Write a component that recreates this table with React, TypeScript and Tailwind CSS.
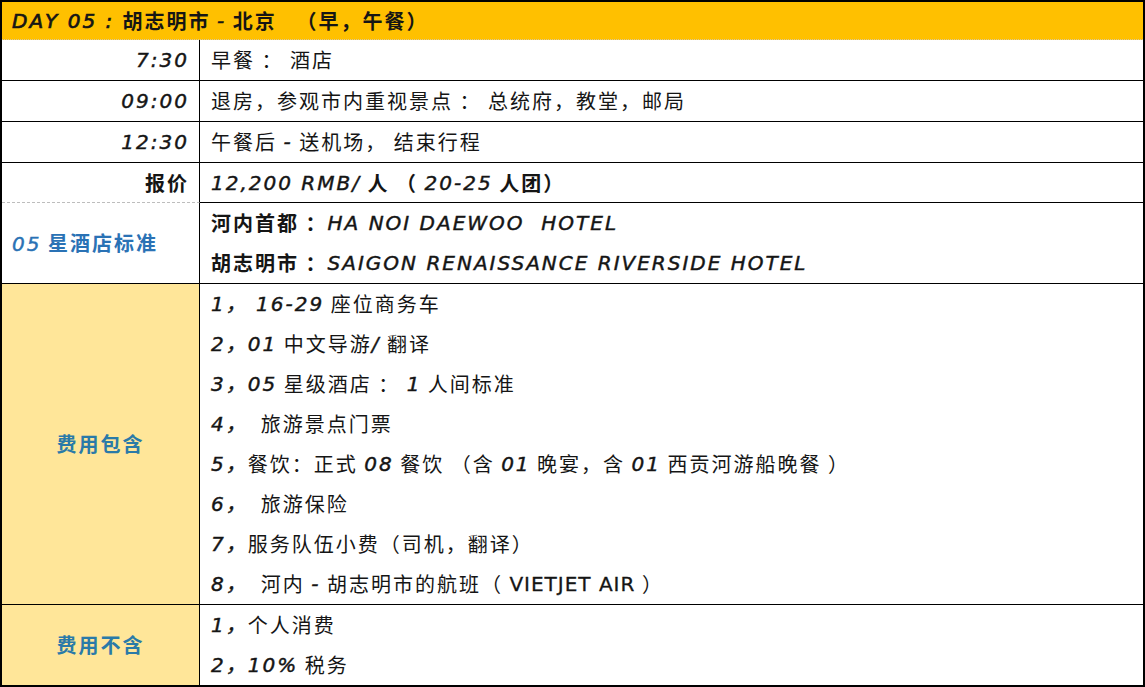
import type { ReactNode } from 'react';

const CJK = "font-['Noto_Sans_CJK_SC','Noto_Sans',sans-serif]";
const LAT =
  "font-['DejaVu_Sans','Noto_Sans_CJK_SC',sans-serif] italic font-normal text-[20px] tracking-[2px] [-webkit-text-stroke:0.45px]";
const LAT_UP =
  "font-['DejaVu_Sans','Noto_Sans_CJK_SC',sans-serif] font-normal text-[20px] tracking-[1px] [-webkit-text-stroke:0.3px]";

function L({ children, upright }: { children: ReactNode; upright?: boolean }) {
  return <span className={upright ? LAT_UP : LAT}>{children}</span>;
}

function Row({
  left,
  children,
  leftClass = '',
  lines = 1,
}: {
  left: ReactNode;
  children: ReactNode;
  leftClass?: string;
  lines?: number;
}) {
  return (
    <div className="flex border-b border-black">
      <div className={`flex w-[198px] shrink-0 items-center border-r border-black ${leftClass}`}>{left}</div>
      <div className="flex flex-1 flex-col justify-center pl-[11px]" style={{ minHeight: lines * 40 - 1 }}>
        {children}
      </div>
    </div>
  );
}

function Line({ children }: { children: ReactNode }) {
  return <div className="flex h-[40px] items-center whitespace-pre">{children}</div>;
}

export default function App() {
  const includes: ReactNode[] = [
    <><L>1， 16-29</L> 座位商务车</>,
    <><L>2，01</L> 中文导游<L>/</L> 翻译</>,
    <><L>3，05</L> 星级酒店 ： <L>1</L> 人间标准</>,
    <><L>4，</L>  旅游景点门票</>,
    <><L>5，</L>餐饮：正式 <L>08</L> 餐饮 （含 <L>01</L> 晚宴，含 <L>01</L> 西贡河游船晚餐 ）</>,
    <><L>6，</L>  旅游保险</>,
    <><L>7，</L>服务队伍小费（司机，翻译）</>,
    <><L>8，</L>  河内 <L>-</L> 胡志明市的航班（ <L upright>VIETJET AIR</L> ）</>,
  ];

  return (
    <div className={`h-[687px] w-[1145px] bg-white text-[20px] leading-none tracking-[2px] text-[#151515] ${CJK}`}>
      <div className="flex h-full flex-col border-2 border-black">
        <div className="flex h-[40px] items-center whitespace-pre border-b border-dotted border-[#d8c9a0] bg-[#FFC000] pl-[10px] font-bold">
          <span className="font-['DejaVu_Sans',sans-serif] text-[20px] font-normal italic tracking-[2px] [-webkit-text-stroke:0.7px]">
            {'DAY 05 : '}
          </span>
          {'胡志明市 '}
          <L>-</L>
          {' 北京   （早，午餐）'}
        </div>

        <Row left={<L>7:30</L>} leftClass="justify-end pr-[10px]">
          <Line>早餐 ： 酒店</Line>
        </Row>
        <Row left={<L>09:00</L>} leftClass="justify-end pr-[10px]">
          <Line>退房，参观市内重视景点 ： 总统府，教堂，邮局</Line>
        </Row>
        <Row left={<L>12:30</L>} leftClass="justify-end pr-[10px]">
          <Line>午餐后 <L>-</L> 送机场， 结束行程</Line>
        </Row>

        <div className="flex">
          <div className="flex w-[198px] shrink-0 items-center justify-end border-r border-b border-dashed border-r-black border-b-[#bdbdbd] pr-[10px] font-bold [border-right-style:solid]">
            报价
          </div>
          <div className="flex h-[40px] flex-1 items-center whitespace-pre border-b border-black pl-[11px] font-bold">
            <L>12,200 RMB/</L> 人 （ <L>20-25</L> 人团）
          </div>
        </div>

        <Row
          left={
            <span className="font-bold text-[#2a72b5]">
              <L>05</L> 星酒店标准
            </span>
          }
          leftClass="pl-[10px]"
          lines={2}
        >
          <Line>
            <span className="font-bold">河内首都 ：</span>  <L>HA NOI DAEWOO  HOTEL</L>
          </Line>
          <Line>
            <span className="font-bold">胡志明市 ：</span>  <L>SAIGON RENAISSANCE RIVERSIDE HOTEL</L>
          </Line>
        </Row>

        <Row
          left={<span className="w-full text-center font-bold text-[#2a7aa8]">费用包含</span>}
          leftClass="bg-[#FFE699]"
          lines={8}
        >
          {includes.map((c, i) => (
            <Line key={i}>{c}</Line>
          ))}
        </Row>

        <div className="flex flex-1">
          <div className="flex w-[198px] shrink-0 items-center border-r border-black bg-[#FFE699]">
            <span className="w-full text-center font-bold text-[#2a7aa8]">费用不含</span>
          </div>
          <div className="flex flex-1 flex-col justify-center pl-[11px]">
            <Line>
              <L>1，</L>个人消费
            </Line>
            <Line>
              <L>2，10%</L> 税务
            </Line>
          </div>
        </div>
      </div>
    </div>
  );
}
